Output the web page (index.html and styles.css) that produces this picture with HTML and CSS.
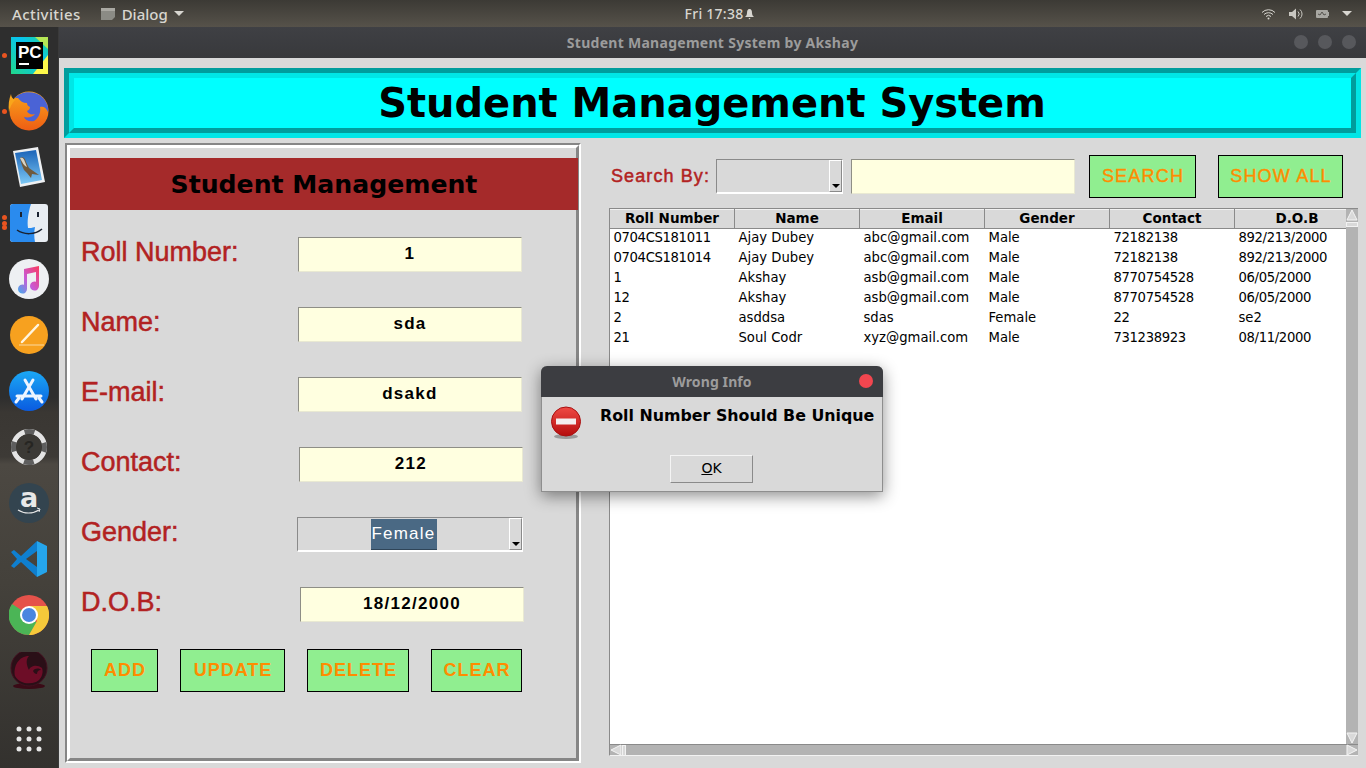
FILE: index.html
```html
<!DOCTYPE html>
<html lang="en">
<head>
    <meta charset="UTF-8">
    <meta name="viewport" content="width=device-width, initial-scale=1.0">
    <title>Student Management System by Akshay</title>
    <link rel="stylesheet" href="styles.css">
</head>
<body>
    <!-- gnome top bar -->
    <header class="topbar">
        <div class="topbar-left">
            <span class="activities">Activities</span>
            <span class="app-menu">
                <svg class="app-icon" width="16" height="14" viewBox="0 0 16 14"><path d="M1 1h14v9l-3 3H1z" fill="#8b8b85"/><path d="M1 1h14v3H1z" fill="#aaa9a3"/></svg>
                Dialog
                <i class="caret"></i>
            </span>
        </div>
        <div class="clock">Fri 17:38
            <svg width="11" height="12" viewBox="0 0 11 12"><path d="M5.500 1C3.500 1 3 3 3 5c0 2-1 3-2 4h9C9 8 8 7 8 5c0-2-.5-4-2.500-4zM4.500 10h2l-1 1.500z" fill="#d8d6d0"/></svg>
        </div>
        <div class="status">
            <svg width="15" height="12" viewBox="0 0 15 12" fill="none" stroke="#d8d6d0"><path d="M1 4.500a9 9 0 0 1 13 0M3 6.500a6.500 6.500 0 0 1 9 0M5 8.500a3.500 3.500 0 0 1 5 0"/><circle cx="7.500" cy="10.500" r="1" fill="#d8d6d0" stroke="none"/></svg>
            <svg width="14" height="12" viewBox="0 0 14 12"><path d="M0 4h3l4-3.500v11L3 8H0z" fill="#c9c7c1"/><path d="M9 3.500a3.500 3.500 0 0 1 0 5M11 1.500a6 6 0 0 1 0 9" fill="none" stroke="#c9c7c1"/></svg>
            <svg width="13" height="10" viewBox="0 0 13 10"><rect x="0" y="1" width="12" height="8" rx="1" fill="#a8a7a2"/><rect x="12" y="3" width="1" height="4" fill="#a8a7a2"/><path d="M2 5l2 1 2-3 2 3 2-1" fill="none" stroke="#55534e"/></svg>
            <i class="caret"></i>
        </div>
    </header>

    <div class="desktop">
        <nav class="dock">
            <div class="dock-item running">
                <svg width="37" height="37" viewBox="0 0 37 37">
                    <defs><linearGradient id="pc" x1="0" y1="1" x2="1" y2="0"><stop offset="0" stop-color="#21d789"/><stop offset=".6" stop-color="#07c3f2"/><stop offset="1" stop-color="#21d789"/></linearGradient></defs>
                    <rect width="37" height="37" fill="url(#pc)"/>
                    <path d="M22 37L37 18v19z" fill="#fcf84a"/>
                    <path d="M24 0h13v12z" fill="#b5e655"/>
                    <rect x="5" y="5" width="27" height="27" fill="#000"/>
                    <text x="7" y="21" class="pc-text">PC</text>
                    <rect x="8" y="26" width="10" height="2" fill="#fff"/>
                </svg>
            </div>
            <div class="dock-item running">
                <svg width="42" height="40" viewBox="0 0 42 40">
                    <defs><linearGradient id="fox" x1="0" y1="0" x2="0" y2="1"><stop offset="0" stop-color="#f9a51a"/><stop offset="1" stop-color="#ee5d14"/></linearGradient></defs>
                    <circle cx="21" cy="20" r="19.500" fill="url(#fox)"/>
                    <path d="M7 7C13 0 27-1 35 7c4 4 6 10 5 14-2-5-5-6-8-5 1 5-1 11-6 14-5 1-9-1-10-4 4 1 9 0 11-3-3 1-7 0-8-3 2-1 3-2 3-4-2-1-3-2-3-4-4 0-7-2-9-5z" fill="#4a63d6"/>
                    <path d="M1 21C0 14 1 8 3 3c0 3 2 5 4 6-3 3-5 7-6 12z" fill="#f9a51a"/>
                </svg>
            </div>
            <div class="dock-item">
                <svg width="34" height="40" viewBox="0 0 34 40">
                    <defs><linearGradient id="sky" x1="0" y1="0" x2="0" y2="1"><stop offset="0" stop-color="#1a63b8"/><stop offset="1" stop-color="#7cc8f5"/></linearGradient></defs>
                    <path d="M1 4l25-4 7 35-25 5z" fill="#eef0f2"/>
                    <path d="M3 6l21-3 6 30-21 4z" fill="url(#sky)"/>
                    <path d="M8 11c3-2 5 0 6 4l3 6 10 7-7-1-1 4-4-5-3-3c-2-4-3-8-4-12z" fill="#6f5a3d"/>
                    <path d="M8 11c3-1 4 1 5 4l2 5c-3-1-5-5-7-9z" fill="#d8d3c6"/>
                </svg>
            </div>
            <div class="dock-item running triple">
                <svg width="38" height="38" viewBox="0 0 38 38">
                    <rect width="38" height="38" rx="3" fill="#e8edf2"/>
                    <path d="M3 0h18c-3 9-4 18-3 24 2 0 4 0 7-1-1 5-1 10 0 15H3a3 3 0 0 1-3-3V3a3 3 0 0 1 3-3z" fill="#2a8bee"/>
                    <rect x="10" y="8" width="2" height="5" fill="#1a2230"/>
                    <rect x="27" y="8" width="2" height="5" fill="#1a2230"/>
                    <path d="M7 26c7 5 18 5 25-1" fill="none" stroke="#1a2230" stroke-width="1.500"/>
                </svg>
            </div>
            <div class="dock-item">
                <svg width="40" height="40" viewBox="0 0 40 40">
                    <defs><linearGradient id="note" x1="1" y1="0" x2="0" y2="1"><stop offset="0" stop-color="#fb3a5f"/><stop offset=".55" stop-color="#c85bd6"/><stop offset="1" stop-color="#3dafee"/></linearGradient></defs>
                    <circle cx="20" cy="20" r="20" fill="#eef0f3"/>
                    <path d="M15 10l15-3v20a4.500 4.500 0 1 1-3-4.200V13l-9 2v15a4.500 4.500 0 1 1-3-4.200z" fill="url(#note)"/>
                </svg>
            </div>
            <div class="dock-item">
                <svg width="38" height="38" viewBox="0 0 38 38">
                    <circle cx="19" cy="19" r="19" fill="#f7a11f"/>
                    <path d="M12 26L28 9" stroke="#fff5e0" stroke-width="2.500" stroke-linecap="round"/>
                    <path d="M9 29h25" stroke="#fbd9a0" stroke-width="1"/>
                </svg>
            </div>
            <div class="dock-item">
                <svg width="40" height="40" viewBox="0 0 40 40">
                    <defs><linearGradient id="store" x1="0" y1="0" x2="0" y2="1"><stop offset="0" stop-color="#1ba8f5"/><stop offset="1" stop-color="#0a5be0"/></linearGradient></defs>
                    <circle cx="20" cy="20" r="20" fill="url(#store)"/>
                    <path d="M16 9l11 19M24 9L13 28M8 25h24M7 31l3-4M33 31l-3-4" stroke="#eef5ff" stroke-width="3" stroke-linecap="round" fill="none"/>
                </svg>
            </div>
            <div class="dock-item">
                <svg width="36" height="36" viewBox="0 0 36 36">
                    <circle cx="18" cy="18" r="15.500" fill="none" stroke="#e4e4e4" stroke-width="5"/>
                    <circle cx="18" cy="18" r="15.500" fill="none" stroke="#5e5e5e" stroke-width="5" stroke-dasharray="10 14.350" stroke-dashoffset="5"/>
                    <circle cx="18" cy="18" r="13" fill="#3b3935"/>
                    <text x="18" y="24" class="help-text">?</text>
                </svg>
            </div>
            <div class="dock-item">
                <svg width="40" height="40" viewBox="0 0 40 40">
                    <circle cx="20" cy="20" r="20" fill="#33444f"/>
                    <text x="20" y="24" class="amazon-text">a</text>
                    <path d="M9 27c6 4 15 4 21 0" fill="none" stroke="#e8e8e8" stroke-width="1.200"/>
                    <path d="M28 25l3 1-1 3" fill="none" stroke="#e8e8e8"/>
                </svg>
            </div>
            <div class="dock-item">
                <svg width="36" height="36" viewBox="0 0 36 36">
                    <path d="M26 0L10 15 3 9 0 11l6 7-6 7 3 2 7-6 16 15V26l-11-8 11-8z" fill="#0f7fcf"/>
                    <path d="M26 0l10 5v26l-10 5z" fill="#25a5ec"/>
                </svg>
            </div>
            <div class="dock-item">
                <svg width="40" height="40" viewBox="0 0 40 40">
                    <circle cx="20" cy="20" r="20" fill="#e5524a"/>
                    <path d="M20 20L3 9a20 20 0 0 0 17 31l8-12z" fill="#4bb556"/>
                    <path d="M20 11h18a20 20 0 0 1-18 29l8-14z" fill="#f5c93a"/>
                    <circle cx="20" cy="20" r="9" fill="#fff"/>
                    <circle cx="20" cy="20" r="7" fill="#4a86e0"/>
                </svg>
            </div>
            <div class="dock-item">
                <svg width="40" height="38" viewBox="0 0 40 38">
                    <ellipse cx="20" cy="34" rx="16" ry="3" fill="#3a0a16"/>
                    <circle cx="20" cy="16" r="18" fill="#2a0f17" stroke="#431020" stroke-width="1"/>
                    <path d="M6 24C4 14 10 4 20 4c-4 4-2 10 0 14 1-4 8-6 13-2 2 5-1 12-6 14-8 3-17 1-21-6z" fill="#6d0d27"/>
                    <path d="M24 19c2-3 6-3 8-1-3 0-4 2-4 4-2 0-3-1-4-3z" fill="#2a0f17"/>
                </svg>
            </div>
            <div class="dock-item grid-item">
                <svg width="26" height="26" viewBox="0 0 26 26" fill="#e6e6e6">
                    <circle cx="3" cy="3" r="2.500"/><circle cx="13" cy="3" r="2.500"/><circle cx="23" cy="3" r="2.500"/>
                    <circle cx="3" cy="13" r="2.500"/><circle cx="13" cy="13" r="2.500"/><circle cx="23" cy="13" r="2.500"/>
                    <circle cx="3" cy="23" r="2.500"/><circle cx="13" cy="23" r="2.500"/><circle cx="23" cy="23" r="2.500"/>
                </svg>
            </div>
        </nav>

        <main class="window">
            <div class="titlebar">
                <span class="title-text">Student Management System by Akshay</span>
                <div class="win-buttons"><i></i><i></i><i></i></div>
            </div>
            <div class="content">
                <h1 class="banner"><span class="banner-inner">Student Management System</span></h1>

                <div class="columns">
                    <section class="manage">
                        <div class="manage-inner">
                            <h2 class="manage-title">Student Management</h2>
                            <div class="field">
                                <label class="field-label">Roll Number:</label>
                                <div class="entry">1</div>
                            </div>
                            <div class="field">
                                <label class="field-label">Name:</label>
                                <div class="entry">sda</div>
                            </div>
                            <div class="field">
                                <label class="field-label">E-mail:</label>
                                <div class="entry">dsakd</div>
                            </div>
                            <div class="field">
                                <label class="field-label">Contact:</label>
                                <div class="entry shift-1">212</div>
                            </div>
                            <div class="field">
                                <label class="field-label">Gender:</label>
                                <div class="combo combo-gender">
                                    <span class="combo-value"><span class="selected">Female</span></span>
                                    <span class="combo-arrow"><i></i></span>
                                </div>
                            </div>
                            <div class="field">
                                <label class="field-label">D.O.B:</label>
                                <div class="entry shift-2">18/12/2000</div>
                            </div>
                            <div class="actions">
                                <button class="btn btn-add">ADD</button>
                                <button class="btn btn-update">UPDATE</button>
                                <button class="btn btn-delete">DELETE</button>
                                <button class="btn btn-clear">CLEAR</button>
                            </div>
                        </div>
                    </section>

                    <section class="records">
                        <div class="search-row">
                            <span class="search-label">Search By:</span>
                            <div class="combo combo-search">
                                <span class="combo-value"></span>
                                <span class="combo-arrow"><i></i></span>
                            </div>
                            <div class="entry entry-search"></div>
                            <button class="btn btn-search">SEARCH</button>
                            <button class="btn btn-showall">SHOW ALL</button>
                        </div>

                        <div class="table-wrap">
                            <div class="table-box">
                                <table>
                                    <thead>
                                        <tr><th>Roll Number</th><th>Name</th><th>Email</th><th>Gender</th><th>Contact</th><th>D.O.B</th></tr>
                                    </thead>
                                    <tbody id="studentTable"></tbody>
                                </table>
                            </div>
                            <div class="vscroll">
                                <svg width="12" height="12" viewBox="0 0 12 12"><path d="M6 1l5 10H1z" fill="#d9d9d9" stroke="#f4f4f4"/></svg>
                                <span class="vthumb"></span>
                                <span class="fill"></span>
                                <svg width="12" height="12" viewBox="0 0 12 12"><path d="M6 11L1 1h10z" fill="#d9d9d9" stroke="#f4f4f4"/></svg>
                            </div>
                            <div class="hscroll">
                                <svg width="12" height="12" viewBox="0 0 12 12"><path d="M1 6l10-5v10z" fill="#d9d9d9" stroke="#f4f4f4"/></svg>
                                <span class="hthumb"></span>
                                <span class="fill"></span>
                                <svg width="12" height="12" viewBox="0 0 12 12"><path d="M11 6L1 1v10z" fill="#d9d9d9" stroke="#f4f4f4"/></svg>
                            </div>
                        </div>
                    </section>
                </div>
            </div>
        </main>

        <!-- message box on top of the window -->
        <div class="dialog">
            <div class="dialog-title">
                <span>Wrong Info</span>
                <i class="dialog-close"></i>
            </div>
            <div class="dialog-body">
                <svg class="dialog-icon" width="32" height="34" viewBox="0 0 32 34">
                    <defs><linearGradient id="stop" x1="0" y1="0" x2="0" y2="1"><stop offset="0" stop-color="#ef4a44"/><stop offset="1" stop-color="#b50d0d"/></linearGradient></defs>
                    <ellipse cx="16" cy="30.500" rx="12" ry="2.500" fill="#9a9a9a"/>
                    <circle cx="16" cy="15.500" r="14.500" fill="url(#stop)" stroke="#a81010"/>
                    <rect x="6" y="12.500" width="20" height="6" fill="#f4eeee"/>
                </svg>
                <p class="dialog-msg">Roll Number Should Be Unique</p>
            </div>
            <button class="ok-btn"><u>O</u>K</button>
        </div>
    </div>

    <script>
        const students = [
            ["0704CS181011", "Ajay Dubey", "abc@gmail.com", "Male", "72182138", "892/213/2000"],
            ["0704CS181014", "Ajay Dubey", "abc@gmail.com", "Male", "72182138", "892/213/2000"],
            ["1", "Akshay", "asb@gmail.com", "Male", "8770754528", "06/05/2000"],
            ["12", "Akshay", "asb@gmail.com", "Male", "8770754528", "06/05/2000"],
            ["2", "asddsa", "sdas", "Female", "22", "se2"],
            ["21", "Soul Codr", "xyz@gmail.com", "Male", "731238923", "08/11/2000"]
        ];

        const tableBody = document.getElementById("studentTable");
        students.forEach(student => {
            const row = document.createElement("tr");
            // cells that start with a digit get the tighter number spacing
            row.innerHTML = student.map(cell => `<td class="${/^\d/.test(cell) ? "num" : ""}">${cell}</td>`).join("");
            tableBody.appendChild(row);
        });
    </script>
</body>
</html>
```

FILE: styles.css
```css
* {
    box-sizing: border-box;
}
html, body {
    margin: 0;
    height: 768px;
    overflow: hidden;
}
body {
    display: flex;
    flex-direction: column;
    font-family: "DejaVu Sans", sans-serif;
    background-color: #2f2f2f;
}

/* top bar */
.topbar {
    height: 27px;
    flex: none;
    display: grid;
    grid-template-columns: 1fr auto 1fr;
    align-items: center;
    background: linear-gradient(#3c3a35, #56524a);
    color: #d8d6d0;
    font-family: "Noto Sans", sans-serif;
    font-size: 15px;
    font-weight: 500;
    padding: 0 12px;
}
.topbar-left {
    display: flex;
    align-items: center;
    gap: 19px;
}
.activities {
    letter-spacing: .4px;
}
.app-menu {
    display: flex;
    align-items: center;
    gap: 6px;
}
.caret {
    display: inline-block;
    border-left: 5px solid transparent;
    border-right: 5px solid transparent;
    border-top: 5px solid #d8d6d0;
}
.clock {
    font-size: 14px;
    letter-spacing: .25px;
    display: flex;
    align-items: center;
    gap: 1px;
    padding-left: 74px;
}
.status {
    display: flex;
    justify-content: flex-end;
    align-items: center;
    gap: 13px;
    padding-right: 2px;
}

/* dock and window */
.desktop {
    flex: 1;
    display: flex;
    position: relative;
    min-height: 0;
}
.dock {
    width: 59px;
    flex: none;
    display: flex;
    flex-direction: column;
    background: linear-gradient(#2e2e2e 0, #2e2e2e 50%, #3a3733 52%, #3d3a36 58%, #4c4842 59%, #44413b 75%, #33312e 100%);
    border-right: 1px solid #3a3a3a;
}
.dock-item {
    height: 56px;
    flex: none;
    display: flex;
    align-items: center;
    justify-content: center;
    position: relative;
}
.running::before {
    content: "";
    position: absolute;
    left: 2px;
    top: 26px;
    width: 5px;
    height: 5px;
    border-radius: 50%;
    background-color: #e95420;
}
.triple::after {
    content: "";
    position: absolute;
    left: 2px;
    top: 20px;
    width: 5px;
    height: 5px;
    border-radius: 50%;
    background-color: #e95420;
    box-shadow: 0 10px 0 #e95420;
}
.grid-item {
    margin-top: 12px;
}
.pc-text {
    font-family: "Liberation Sans", sans-serif;
    font-weight: bold;
    font-size: 17px;
    fill: #fff;
}
.help-text {
    font-family: "Liberation Sans", sans-serif;
    font-weight: bold;
    font-size: 17px;
    text-anchor: middle;
    fill: #262522;
}
.amazon-text {
    font-family: "DejaVu Sans", sans-serif;
    font-weight: bold;
    font-size: 27px;
    text-anchor: middle;
    fill: #e8e8e8;
}
.window {
    flex: 1;
    display: flex;
    flex-direction: column;
    min-width: 0;
}
.titlebar {
    height: 31px;
    flex: none;
    position: relative;
    display: flex;
    align-items: center;
    justify-content: center;
    background: linear-gradient(#3f4044, #38393c);
}
.title-text {
    color: #9c9c9c;
    font-family: "Noto Sans", sans-serif;
    font-weight: 700;
    font-size: 14px;
    letter-spacing: .28px;
}
.win-buttons {
    position: absolute;
    right: 10px;
    top: 8px;
    display: flex;
    gap: 10px;
}
.win-buttons i {
    width: 14px;
    height: 14px;
    border-radius: 50%;
    background-color: #57585c;
}
.content {
    flex: 1;
    background-color: #d9d9d9;
    padding: 10px 5px 0;
    min-height: 0;
}

/* banner */
.banner {
    margin: 0;
    height: 70px;
    border: 5px solid;
    border-color: #009d9d #00e6e6 #00e6e6 #009d9d;
    background-color: #00ffff;
}
.banner-inner {
    height: 100%;
    display: flex;
    align-items: center;
    justify-content: center;
    border: 5px solid;
    border-color: #00e6e6 #009d9d #009d9d #00e6e6;
    color: #000;
    font-size: 39.950px;
    font-weight: bold;
    padding-bottom: 1px;
    padding-right: 1px;
}
.columns {
    display: flex;
    padding-top: 5px;
}

/* left form */
.manage {
    width: 516px;
    height: 620px;
    margin-left: 1px;
    border: 2px solid;
    border-color: #868686 #fff #fff #868686;
}
.manage-inner {
    height: 100%;
    border: 3px solid;
    border-color: #fff #868686 #868686 #fff;
    padding-top: 10px;
}
.manage-title {
    margin: 0 -2px 0 0;
    height: 52px;
    display: flex;
    align-items: center;
    justify-content: center;
    background-color: #a52a2a;
    color: #000;
    font-size: 25.150px;
    font-weight: bold;
}
.field {
    height: 70px;
    display: flex;
    align-items: center;
    padding-left: 11px;
}
.field:first-of-type {
    margin-top: 9px;
}
.field-label {
    width: 217px;
    flex: none;
    padding-bottom: 4px;
    color: #b22222;
    font-family: "Liberation Sans", sans-serif;
    font-size: 27px;
    -webkit-text-stroke: .5px #b22222;
}
.entry {
    width: 224px;
    height: 35px;
    display: flex;
    align-items: center;
    justify-content: center;
    padding-bottom: 1px;
    background-color: #ffffe0;
    border: 1px solid;
    border-color: #8e8e86 #e9e9d2 #e9e9d2 #8e8e86;
    color: #000;
    font-family: "Liberation Sans", sans-serif;
    font-size: 17px;
    font-weight: bold;
    letter-spacing: 1.300px;
}
.shift-1 {
    margin-left: 1px;
}
.shift-2 {
    margin-left: 2px;
}
.combo {
    height: 35px;
    display: flex;
    border: 1px solid;
    border-color: #8a8a8a #fff #fff #8a8a8a;
    border-width: 1px 1px 2px 1px;
}
.combo-gender {
    width: 226px;
    margin-left: -1px;
}
.combo-search {
    width: 127px;
}
.combo-value {
    flex: 1;
    display: flex;
    justify-content: center;
    padding-top: 1px;
}
.selected {
    width: 66px;
    padding-top: 5px;
    padding-left: 1px;
    background-color: #4a6984;
    border-bottom: 1px solid #2f4558;
    color: #fff;
    font-family: "Liberation Sans", sans-serif;
    font-size: 17px;
    letter-spacing: 1.200px;
}
.combo-arrow {
    width: 13px;
    display: flex;
    align-items: flex-end;
    justify-content: center;
    padding-bottom: 3px;
    border: 1px solid;
    border-color: #fff #8a8a8a #8a8a8a #fff;
    background-color: #d9d9d9;
}
.combo-arrow i {
    border-left: 4px solid transparent;
    border-right: 4px solid transparent;
    border-top: 4px solid #000;
}

/* buttons */
.btn {
    height: 43px;
    padding: 0 0 0 1px;
    background-color: #90ee90;
    border: 1px solid #000;
    color: #ff8c00;
    font-family: "Liberation Sans", sans-serif;
    font-size: 18px;
    font-weight: bold;
    letter-spacing: 1px;
    cursor: pointer;
}
.actions {
    display: flex;
    margin-top: 10px;
    padding-left: 21px;
    gap: 22px;
}
.btn-add {
    width: 67px;
}
.btn-update {
    width: 105px;
}
.btn-delete {
    width: 102px;
}
.btn-clear {
    width: 91px;
}

/* right side */
.records {
    flex: 1;
    padding-left: 30px;
    min-width: 0;
}
.search-row {
    display: flex;
    align-items: center;
    height: 43px;
    margin-top: 12px;
}
.search-label {
    width: 105px;
    flex: none;
    color: #b22222;
    font-family: "Liberation Sans", sans-serif;
    font-size: 18px;
    letter-spacing: 1.100px;
    -webkit-text-stroke: .5px #b22222;
    padding-bottom: 1px;
}
.entry-search {
    margin-left: 8px;
}
.btn-search {
    width: 107px;
    margin-left: 14px;
    font-weight: normal;
    letter-spacing: 1.200px;
    -webkit-text-stroke: .4px #ff8c00;
}
.btn-showall {
    width: 125px;
    margin-left: 22px;
    font-weight: normal;
    letter-spacing: 1.200px;
    -webkit-text-stroke: .4px #ff8c00;
}
.table-wrap {
    display: grid;
    grid-template-columns: 737px 12px;
    grid-template-rows: 536px 12px;
    margin: 10px 0 0 -2px;
}
.table-box {
    background-color: #fff;
    border-top: 1px solid #8a8a8a;
    border-left: 1px solid #8a8a8a;
    overflow: hidden;
}
table {
    border-collapse: collapse;
    table-layout: fixed;
    width: 750px;
    margin-left: -1px;
    font-size: 13.200px;
    color: #000;
}
th {
    width: 125px;
    height: 18px;
    padding: 0 0 2px;
    background-color: #d9d9d9;
    border-top: 1px solid #f2f2f2;
    border-left: 1px solid #f2f2f2;
    border-right: 1px solid #8a8a8a;
    border-bottom: 1px solid #8a8a8a;
    font-size: 13.500px;
    font-weight: bold;
    text-align: center;
}
td {
    height: 20px;
    padding: 0 0 2px 4px;
    white-space: nowrap;
}
td.num {
    letter-spacing: -.35px;
}
.vscroll, .hscroll {
    display: flex;
    background-color: #b3b3b3;
}
.vscroll {
    flex-direction: column;
    align-items: center;
    border-top: 1px solid #8a8a8a;
}
.hscroll {
    grid-column: 1 / 3;
    align-items: center;
    border-top: 1px solid #8a8a8a;
    border-left: 1px solid #8a8a8a;
    border-bottom: 1px solid #f2f2f2;
}
.fill {
    flex: 1;
}
.vthumb {
    width: 12px;
    height: 5px;
    margin-top: 1px;
    background-color: #d9d9d9;
    border: 1px solid #f2f2f2;
}
.hthumb {
    width: 4px;
    height: 11px;
    background-color: #d9d9d9;
    border: 1px solid #f2f2f2;
}

/* dialog */
.dialog {
    position: absolute;
    left: 541px;
    top: 339px;
    width: 342px;
    height: 126px;
    background-color: #d9d9d9;
    border: 1px solid #8e8e8e;
    border-top: 0;
    border-radius: 6px 6px 0 0;
    box-shadow: 0 4px 16px rgba(0, 0, 0, .45);
}
.dialog-title {
    height: 31px;
    position: relative;
    display: flex;
    align-items: center;
    justify-content: center;
    margin: 0 -1px;
    background-color: #3c3d41;
    border-radius: 6px 6px 0 0;
    color: #9c9c9c;
    font-family: "Noto Sans", sans-serif;
    font-weight: 700;
    font-size: 14px;
    letter-spacing: .1px;
}
.dialog-close {
    position: absolute;
    right: 10px;
    top: 8px;
    width: 14px;
    height: 14px;
    border-radius: 50%;
    background-color: #f2464f;
}
.dialog-body {
    display: flex;
    align-items: flex-start;
    padding: 9px 0 0 8px;
}
.dialog-icon {
    flex: none;
}
.dialog-msg {
    margin: 0 0 0 18px;
    color: #000;
    font-size: 15.850px;
    font-weight: bold;
    white-space: nowrap;
}
.ok-btn {
    display: block;
    width: 83px;
    height: 28px;
    margin: 15px 0 0 128px;
    padding: 0 0 2px;
    background-color: #d9d9d9;
    border: 1px solid;
    border-color: #f4f4f4 #8a8a8a #8a8a8a #f4f4f4;
    color: #000;
    font-family: "DejaVu Sans", sans-serif;
    font-size: 14px;
}
```
